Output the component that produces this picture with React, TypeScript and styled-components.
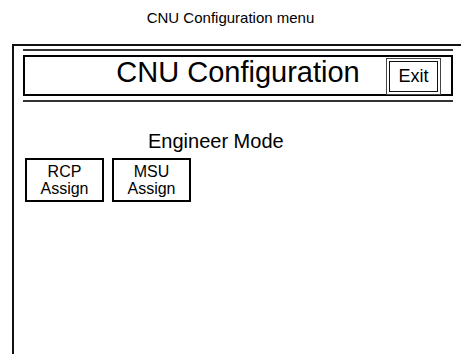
import styled, { createGlobalStyle } from "styled-components";

const GlobalStyle = createGlobalStyle`
  html, body {
    margin: 0;
    padding: 0;
    background: #ffffff;
    overflow: hidden;
  }
  body {
    font-family: "Liberation Sans", Arial, sans-serif;
    color: #000000;
  }
`;

const Page = styled.div`
  width: 461px;
  height: 354px;
  overflow: hidden;
`;

const Caption = styled.div`
  height: 44px;
  padding-top: 9px;
  box-sizing: border-box;
  text-align: center;
  font-size: 15px;
  line-height: 18px;
`;

const Screen = styled.div`
  margin-left: 12px;
  height: 320px;
  border-top: 2px solid #111;
  border-left: 2px solid #111;
  padding: 3px 8px 0 9px;
  box-sizing: border-box;
`;

const Rule = styled.div`
  height: 2px;
  background: #333;
`;

const Header = styled.div`
  margin: 4px 0;
  height: 41px;
  box-sizing: border-box;
  border: 2px solid #000;
  display: grid;
  grid-template-columns: 1fr auto 1fr;
  align-items: start;
`;

const Title = styled.h1`
  grid-column: 2;
  margin: 0;
  font-size: 29px;
  font-weight: normal;
  line-height: 29px;
  padding-top: 1px;
`;

const ExitButton = styled.button`
  grid-column: 3;
  justify-self: end;
  margin: 4px 13px 0 0;
  width: 49px;
  height: 31px;
  padding: 0;
  background: #fff;
  border: 1px solid #111;
  outline: 1px solid #444;
  outline-offset: 2px;
  font-family: "Liberation Sans", Arial, sans-serif;
  font-size: 18px;
  color: #000;
`;

const Body = styled.div`
  padding: 28px 0 0 2px;
`;

const ModeLabel = styled.div`
  font-size: 20px;
  line-height: 22px;
  padding-left: 123px;
`;

const ButtonRow = styled.div`
  display: flex;
  gap: 8px;
  margin-top: 6px;
`;

const AssignButton = styled.button`
  width: 79px;
  height: 44px;
  padding: 0;
  box-sizing: border-box;
  background: #fff;
  border: 2px solid #000;
  font-family: "Liberation Sans", Arial, sans-serif;
  font-size: 16px;
  line-height: 17px;
  color: #000;
  display: flex;
  flex-direction: column;
  align-items: center;
  justify-content: center;
`;

export default function App() {
  return (
    <Page>
      <GlobalStyle />
      <Caption>CNU Configuration menu</Caption>
      <Screen>
        <Rule />
        <Header>
          <Title>CNU Configuration</Title>
          <ExitButton>Exit</ExitButton>
        </Header>
        <Rule />
        <Body>
          <ModeLabel>Engineer Mode</ModeLabel>
          <ButtonRow>
            <AssignButton>
              <span>RCP</span>
              <span>Assign</span>
            </AssignButton>
            <AssignButton>
              <span>MSU</span>
              <span>Assign</span>
            </AssignButton>
          </ButtonRow>
        </Body>
      </Screen>
    </Page>
  );
}
